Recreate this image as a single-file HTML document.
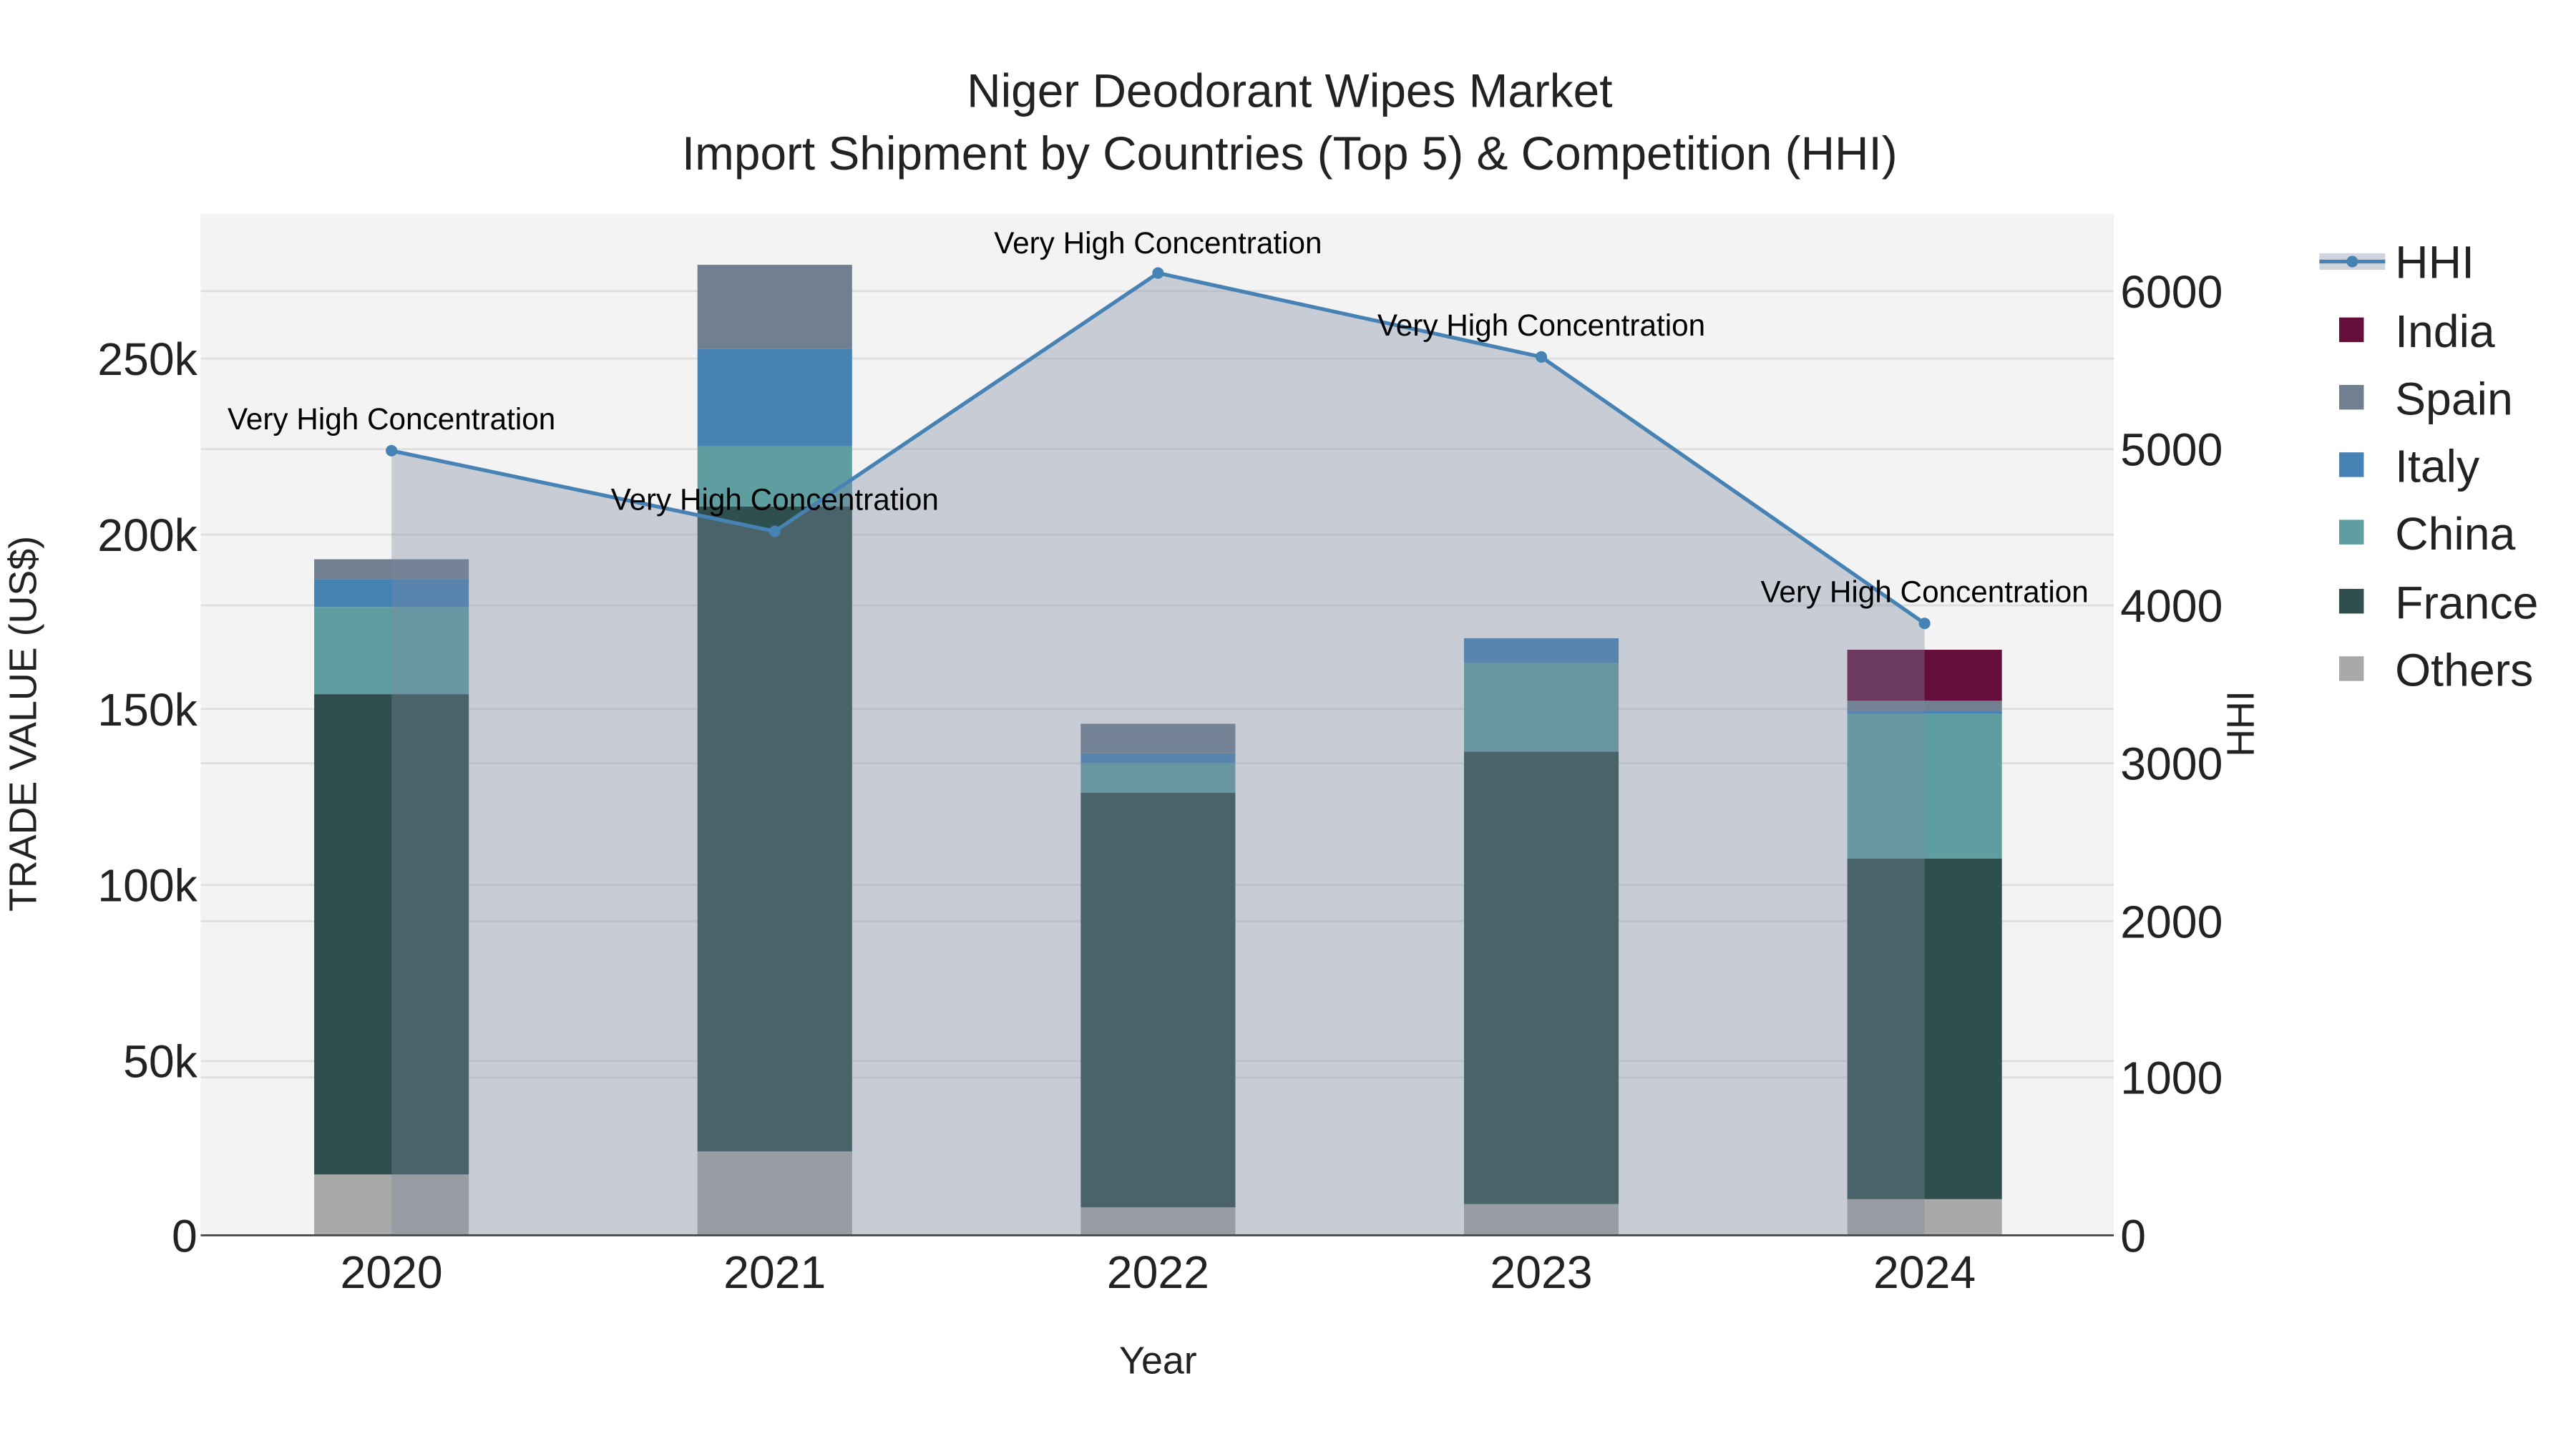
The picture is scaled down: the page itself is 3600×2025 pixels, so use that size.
<!DOCTYPE html>
<html><head><meta charset="utf-8"><style>
html,body{margin:0;padding:0;background:#fff;}
svg{display:block;}
text{font-family:"Liberation Sans",sans-serif;}
</style></head><body>
<svg width="3600" height="2025" viewBox="0 0 1566 880.9" preserveAspectRatio="none" xmlns="http://www.w3.org/2000/svg">
<rect x="0" y="0" width="1566" height="880.9" fill="#fff"/>
<rect x="122" y="130" width="1163" height="621" fill="#f3f3f3"/>
<g stroke="#dedede" stroke-width="1.2">
<line x1="122" x2="1285" y1="645" y2="645"/>
<line x1="122" x2="1285" y1="538" y2="538"/>
<line x1="122" x2="1285" y1="431" y2="431"/>
<line x1="122" x2="1285" y1="325" y2="325"/>
<line x1="122" x2="1285" y1="218" y2="218"/>
<line x1="122" x2="1285" y1="655" y2="655"/>
<line x1="122" x2="1285" y1="560" y2="560"/>
<line x1="122" x2="1285" y1="464" y2="464"/>
<line x1="122" x2="1285" y1="368" y2="368"/>
<line x1="122" x2="1285" y1="273" y2="273"/>
<line x1="122" x2="1285" y1="177" y2="177"/>
</g>
<rect x="191" y="714" width="94" height="37" fill="#a9a9a9"/>
<rect x="191" y="422" width="94" height="292" fill="#2f4f4f"/>
<rect x="191" y="369" width="94" height="53" fill="#5f9ea0"/>
<rect x="191" y="352" width="94" height="17" fill="#4682b4"/>
<rect x="191" y="340" width="94" height="12" fill="#708090"/>
<rect x="424" y="700" width="94" height="51" fill="#a9a9a9"/>
<rect x="424" y="308" width="94" height="392" fill="#2f4f4f"/>
<rect x="424" y="271" width="94" height="37" fill="#5f9ea0"/>
<rect x="424" y="212" width="94" height="59" fill="#4682b4"/>
<rect x="424" y="161" width="94" height="51" fill="#708090"/>
<rect x="657" y="734" width="94" height="17" fill="#a9a9a9"/>
<rect x="657" y="482" width="94" height="252" fill="#2f4f4f"/>
<rect x="657" y="464" width="94" height="18" fill="#5f9ea0"/>
<rect x="657" y="458" width="94" height="6" fill="#4682b4"/>
<rect x="657" y="440" width="94" height="18" fill="#708090"/>
<rect x="890" y="732" width="94" height="19" fill="#a9a9a9"/>
<rect x="890" y="457" width="94" height="275" fill="#2f4f4f"/>
<rect x="890" y="403" width="94" height="54" fill="#5f9ea0"/>
<rect x="890" y="388" width="94" height="15" fill="#4682b4"/>
<rect x="1123" y="729" width="94" height="22" fill="#a9a9a9"/>
<rect x="1123" y="522" width="94" height="207" fill="#2f4f4f"/>
<rect x="1123" y="434" width="94" height="88" fill="#5f9ea0"/>
<rect x="1123" y="432" width="94" height="2" fill="#4682b4"/>
<rect x="1123" y="426" width="94" height="6" fill="#708090"/>
<rect x="1123" y="395" width="94" height="31" fill="#660e3b"/>
<polygon points="238,274 471,323 704,166 937,217 1170,379 1170,751 238,751" fill="rgb(122,136,159)" fill-opacity="0.355"/>
<polyline points="238,274 471,323 704,166 937,217 1170,379" fill="none" stroke="#4682b4" stroke-width="2.3"/>
<g fill="#4682b4">
<circle cx="238" cy="274" r="3.5"/><circle cx="471" cy="323" r="3.5"/><circle cx="704" cy="166" r="3.5"/><circle cx="937" cy="217" r="3.5"/><circle cx="1170" cy="379" r="3.5"/>
</g>
<line x1="122" x2="1285" y1="751" y2="751" stroke="#444" stroke-width="1.2"/>
<g font-size="18.4" text-anchor="middle" fill="#000">
<text x="238" y="261">Very High Concentration</text>
<text x="471" y="310">Very High Concentration</text>
<text x="704" y="154">Very High Concentration</text>
<text x="937" y="204">Very High Concentration</text>
<text x="1170" y="366">Very High Concentration</text>
</g>
<g font-size="28.6" text-anchor="middle" fill="#222">
<text x="784" y="65">Niger Deodorant Wipes Market</text>
<text x="784" y="103">Import Shipment by Countries (Top 5) &amp; Competition (HHI)</text>
</g>
<g font-size="28" text-anchor="end" fill="#222">
<text x="120" y="761">0</text>
<text x="120" y="655">50k</text>
<text x="120" y="548">100k</text>
<text x="120" y="441">150k</text>
<text x="120" y="335">200k</text>
<text x="120" y="228">250k</text>
</g>
<g font-size="28" fill="#222">
<text x="1289" y="761">0</text>
<text x="1289" y="665">1000</text>
<text x="1289" y="570">2000</text>
<text x="1289" y="474">3000</text>
<text x="1289" y="378">4000</text>
<text x="1289" y="283">5000</text>
<text x="1289" y="187">6000</text>
</g>
<g font-size="28" text-anchor="middle" fill="#222">
<text x="238" y="783">2020</text>
<text x="471" y="783">2021</text>
<text x="704" y="783">2022</text>
<text x="937" y="783">2023</text>
<text x="1170" y="783">2024</text>
</g>
<text x="704" y="835" font-size="23.4" text-anchor="middle" fill="#222">Year</text>
<text transform="translate(22,440) rotate(-90)" font-size="23.4" text-anchor="middle" fill="#222">TRADE VALUE (US$)</text>
<text transform="translate(1370,440) rotate(-90)" font-size="23.4" text-anchor="middle" fill="#222">HHI</text>
<rect x="1410" y="154" width="40" height="10" fill="rgb(122,136,159)" fill-opacity="0.355"/>
<line x1="1410" x2="1450" y1="159" y2="159" stroke="#4682b4" stroke-width="2.3"/>
<circle cx="1430" cy="159" r="3.5" fill="#4682b4"/>
<rect x="1422" y="193" width="15" height="15" fill="#660e3b"/>
<rect x="1422" y="234" width="15" height="15" fill="#708090"/>
<rect x="1422" y="275" width="15" height="15" fill="#4682b4"/>
<rect x="1422" y="316" width="15" height="15" fill="#5f9ea0"/>
<rect x="1422" y="358" width="15" height="15" fill="#2f4f4f"/>
<rect x="1422" y="399" width="15" height="15" fill="#a9a9a9"/>
<g font-size="28" fill="#222">
<text x="1456" y="169">HHI</text>
<text x="1456" y="211">India</text>
<text x="1456" y="252">Spain</text>
<text x="1456" y="293">Italy</text>
<text x="1456" y="334">China</text>
<text x="1456" y="376">France</text>
<text x="1456" y="417">Others</text>
</g>
</svg>
</body></html>
